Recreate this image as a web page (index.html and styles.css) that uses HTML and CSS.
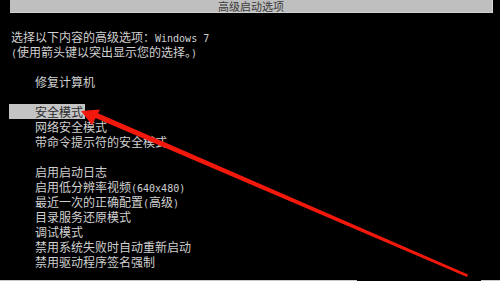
FILE: index.html
```html
<!DOCTYPE html>
<html lang="zh-CN">
<head>
<meta charset="utf-8">
<title>高级启动选项</title>
<link rel="stylesheet" href="styles.css">
</head>
<body>
<div class="screen">
  <div class="titlebar">高级启动选项</div>
  <div class="content">
    <div class="line">选择以下内容的高级选项：<span class="lat">Windows 7</span></div>
    <div class="line"><span class="lat">(</span>使用箭头键以突出显示您的选择。<span class="lat">)</span></div>
    <div class="line blank"></div>
    <div class="item">修复计算机</div>
    <div class="line blank"></div>
    <div class="item selected">安全模式</div>
    <div class="item">网络安全模式</div>
    <div class="item">带命令提示符的安全模式</div>
    <div class="line blank"></div>
    <div class="item">启用启动日志</div>
    <div class="item">启用低分辨率视频<span class="lat">(640x480)</span></div>
    <div class="item">最近一次的正确配置<span class="lat">(</span>高级<span class="lat">)</span></div>
    <div class="item">目录服务还原模式</div>
    <div class="item">调试模式</div>
    <div class="item">禁用系统失败时自动重新启动</div>
    <div class="item">禁用驱动程序签名强制</div>
  </div>
  <div class="bottomline"></div>
  <svg class="arrow" width="500" height="281" viewBox="0 0 500 281">
    <polygon points="92,116.5 94,111.5 468,274.5 467,277" fill="#f2190c"/>
    <polygon points="81,111 100,109.5 92,125" fill="#f2190c"/>
  </svg>
</div>
</body>
</html>
```

FILE: styles.css
```css
html, body {
  margin: 0;
  padding: 0;
  background: #000;
}

.screen {
  position: relative;
  width: 500px;
  height: 281px;
  overflow: hidden;
  display: flex;
  flex-direction: column;
  background: #000;
  font-family: "Noto Sans CJK SC", "DejaVu Sans", sans-serif;
  font-size: 12px;
  color: #d0d0d0;
}

.titlebar {
  margin: 0 7px 0 10px;
  height: 13px;
  line-height: 12px;
  background: #bfbfbf;
  color: #3a3a3a;
  text-align: center;
  font-size: 11px;
  border-right: 1px solid #d8d8d8;
  border-bottom: 1px solid #d0d0d0;
  box-sizing: border-box;
}

.content {
  margin-top: 16px;
  display: flex;
  flex-direction: column;
}

.line {
  height: 15px;
  line-height: 15px;
  padding-left: 11px;
  white-space: nowrap;
}

.item {
  height: 15px;
  line-height: 15px;
  padding-left: 35px;
  white-space: nowrap;
}

.item.selected {
  align-self: flex-start;
  margin-left: 9px;
  padding-left: 26px;
  padding-right: 2px;
  background: #c4c4c4;
  color: #2a2a2a;
}

.lat {
  font-family: "DejaVu Sans Mono", monospace;
  font-size: 10px;
}

.bottomline {
  margin-top: auto;
  height: 1px;
  background: linear-gradient(to right, #c8c8c8 0, #c8c8c8 357px, #000 357px, #000 481px, #c8c8c8 481px);
}

.arrow {
  position: absolute;
  left: 0;
  top: 0;
}
```
